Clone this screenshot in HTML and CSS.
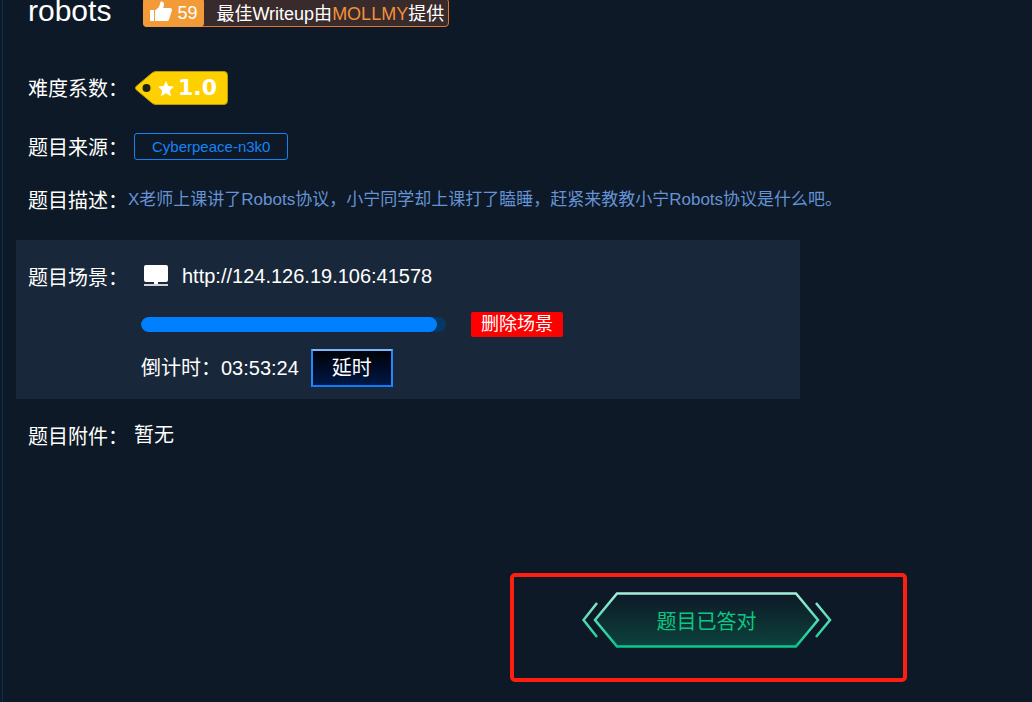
FILE: index.html
```html
<!DOCTYPE html>
<html lang="zh-CN">
<head>
  <meta charset="UTF-8" />
  <meta name="viewport" content="width=device-width, initial-scale=1.0" />
  <title>robots</title>
  <link rel="stylesheet" href="styles.css">
</head>
<body>
  <main class="challenge">
    <header class="heading">
      <h1>robots</h1>
      <div class="writeup">
        <span class="likes">
          <svg width="22" height="22" viewBox="0 0 22 22" fill="#fff" aria-hidden="true">
            <path d="M0 9h4v11H0z"/>
            <path d="M5 9.500l4-3.500 1.500-5C11 0 14.500 .5 14 4L13.200 7H20c2 0 2.200 1.500 1.700 3l-2.500 8c-.4 1.500-1 2-2.500 2H5z"/>
          </svg>
          59
        </span>
        <span class="writeup-text">最佳Writeup由<a href="#">MOLLMY</a>提供</span>
      </div>
    </header>

    <div class="row row-level">
      <span class="label">难度系数：</span>
      <div class="level">
        <svg class="level-shape" width="94" height="34" viewBox="0 0 94 34" aria-hidden="true">
          <path d="M1 15.500L17 2Q19 .5 21 .5H89Q92.500 .5 92.500 4.500V29.500Q92.500 33.500 89 33.500H21Q19 33.500 17 32L1 18.500Q0 17 1 15.500z" fill="#ffd000" stroke="#b99a0c"/>
          <circle cx="11.500" cy="17" r="4" fill="#1d2419"/>
          <path d="M31 10l2.300 5 5.700.6-4.200 3.900 1.200 5.700-5-2.900-5 2.900 1.200-5.700-4.200-3.900 5.700-.6z" fill="#fff"/>
        </svg>
        <span class="level-value">1.0</span>
      </div>
    </div>

    <div class="row row-source">
      <span class="label">题目来源：</span>
      <span class="source">Cyberpeace-n3k0</span>
    </div>

    <div class="row row-desc">
      <span class="label">题目描述：</span>
      <p class="desc">X老师上课讲了Robots协议，小宁同学却上课打了瞌睡，赶紧来教教小宁Robots协议是什么吧。</p>
    </div>

    <section class="scene">
      <span class="label">题目场景：</span>
      <div class="scene-body">
        <div class="address">
          <svg width="24" height="22" viewBox="0 0 24 22" fill="#fff" aria-hidden="true">
            <rect x="0" y="0" width="24" height="17" rx="2"/>
            <path d="M10 16h4v3h-4z"/>
            <path d="M0 19h24v2H0z" opacity=".8"/>
          </svg>
          <a href="http://124.126.19.106:41578">http://124.126.19.106:41578</a>
        </div>
        <div class="progress-line">
          <progress max="100" value="97" aria-label="倒计时"></progress>
          <button type="button" class="btn-delete">删除场景</button>
        </div>
        <div class="countdown">
          <span>倒计时：03:53:24</span>
          <button type="button" class="btn-delay">延时</button>
        </div>
      </div>
    </section>

    <div class="row row-file">
      <span class="label">题目附件：</span>
      <span class="file">暂无</span>
    </div>

    <div class="answer">
      <div class="answer-frame">
        <button type="button" class="btn-answer">
          <svg width="250" height="56" viewBox="0 0 250 56" fill="none" aria-hidden="true">
            <defs>
              <linearGradient id="line" gradientUnits="userSpaceOnUse" x1="0" y1="0" x2="0" y2="56">
                <stop offset="0" stop-color="#a5f0de"/>
                <stop offset="1" stop-color="#06c78a"/>
              </linearGradient>
              <linearGradient id="fill" x1="0" y1="0" x2="0" y2="1">
                <stop offset="0" stop-color="#0d1926"/>
                <stop offset="1" stop-color="#0c423d"/>
              </linearGradient>
            </defs>
            <path d="M35 1.500H214L236 28 214 54.500H35L13 28z" fill="url(#fill)" stroke="url(#line)" stroke-width="2.500"/>
            <path d="M15 11L1.500 28 15 45M234 11l14 17-14 17" stroke="url(#line)" stroke-width="2.500"/>
          </svg>
          <span>题目已答对</span>
        </button>
      </div>
    </div>
  </main>
</body>
</html>
```
FILE: styles.css
```css
* { box-sizing: border-box; }

body {
  margin: 0;
  min-height: 100vh;
  background: #0d1926;
  color: #fff;
  font-family: "Liberation Sans", "Noto Sans CJK SC", sans-serif;
  font-size: 20px;
  line-height: 30px;
}

a { color: inherit; text-decoration: none; }

button {
  font-family: inherit;
  color: #fff;
  cursor: pointer;
}

.challenge {
  min-height: 100vh;
  margin-left: 2px;
  border-left: 1px solid #0b3055;
}

.heading {
  display: flex;
  align-items: flex-start;
  gap: 32px;
  height: 56px;
  padding-left: 25px;
}

h1 {
  margin: 0;
  font-size: 30px;
  font-weight: normal;
  line-height: 22px;
}

.writeup {
  display: flex;
  height: 29px;
  margin-top: -2px;
  border: 1px solid #e0752f;
  border-radius: 4px;
  background: #392b2b;
  font-size: 18px;
}

.likes {
  display: flex;
  align-items: center;
  gap: 5px;
  padding: 0 7px;
  margin: -1px 0 -1px -1px;
  border-radius: 4px;
  background: #f29b38;
}

.likes svg { margin-top: -2px; }

.writeup-text { padding: 0 4px 0 12px; }
.writeup-text a { color: #f0913a; }

.row {
  display: flex;
  align-items: center;
  padding-left: 25px;
}

.label {
  flex: 0 0 100px;
  padding-top: 2px;
  white-space: nowrap;
}

.row-level { height: 64px; }
.row-source { height: 54px; }
.row-desc { height: 52px; }

.level {
  position: relative;
  width: 94px;
  height: 34px;
  margin-left: 7px;
}

.level-shape { display: block; }

.level-value {
  position: absolute;
  top: 2px;
  left: 43px;
  font-family: "DejaVu Sans", sans-serif;
  font-size: 22px;
  font-weight: bold;
}

.source {
  margin: -2px 0 0 6px;
  padding: 0 17px;
  border: 1px solid #1683f5;
  border-radius: 3px;
  color: #1683f5;
  font-size: 15px;
  line-height: 25px;
}

.desc {
  margin: 0;
  color: #6593d5;
  font-size: 17px;
}

.scene {
  display: flex;
  width: calc(100% - 245px);
  margin: 14px 0 0 13px;
  padding: 21px 12px 12px;
  background: #18283a;
}

.scene-body { flex: 1; margin-left: 13px; }

.address {
  display: flex;
  align-items: center;
  gap: 14px;
  padding-left: 3px;
}

.progress-line {
  display: flex;
  align-items: center;
  gap: 25px;
  margin-top: 21px;
}

progress {
  appearance: none;
  width: 305px;
  height: 15px;
  border: 0;
  border-radius: 8px;
  overflow: hidden;
  background: #063866;
}

progress::-webkit-progress-bar { background: #063866; }

progress::-webkit-progress-value {
  border-radius: 8px;
  background: #0080ff;
}

.btn-delete {
  height: 25px;
  padding: 0 10px;
  border: 0;
  border-radius: 2px;
  background: #f00;
  font-size: 18px;
  line-height: 25px;
}

.countdown {
  display: flex;
  align-items: center;
  gap: 12px;
  margin-top: 12px;
}

.btn-delay {
  height: 38px;
  padding: 0 19px;
  border: 2px solid;
  border-color: #7ab8ff #2688fa #0f7dfa;
  background: linear-gradient(#000208, #001746);
  font-size: 20px;
  line-height: 30px;
}

.row-file { margin-top: 21px; }
.file { margin: -2px 0 0 6px; }

.answer {
  display: flex;
  justify-content: flex-end;
  margin-top: 121px;
  padding-right: 125px;
}

.answer-frame {
  display: flex;
  justify-content: center;
  width: 397px;
  padding: 15px 4px 30px 0;
  border: 4px solid #ff1e12;
  border-radius: 5px;
}

.btn-answer {
  position: relative;
  width: 250px;
  height: 56px;
  padding: 0;
  border: 0;
  background: none;
  color: #0bc782;
  font-size: 20px;
}

/* hexagon sits behind the text */
.btn-answer svg { position: absolute; top: 0; left: 0; }
.btn-answer span { position: relative; }
```
